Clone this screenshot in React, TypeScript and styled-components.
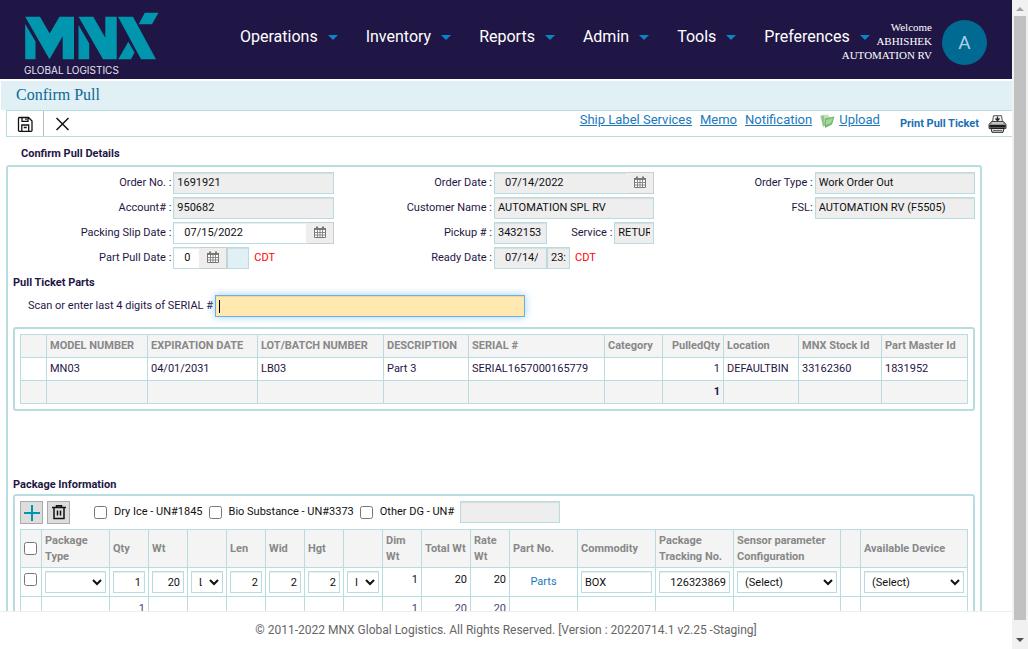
import React, { useId } from "react";
import styled, { createGlobalStyle, css } from "styled-components";

const line = "#b8dce0";
const ink = "#1f1645";

const GlobalStyle = createGlobalStyle`
  *, *::before, *::after { box-sizing: border-box; }
  html, body { margin: 0; background: #fff; }
  body, input, select, button { font-family: Roboto, "Liberation Sans", sans-serif; font-size: 11px; }
  body { color: ${ink}; }
`;

const Screen = styled.div`
  display: flex;
  height: 100vh;
  overflow: hidden;
`;
const Page = styled.div`
  flex: 1;
  min-width: 0;
  display: flex;
  flex-direction: column;
`;

/* Header */
const Header = styled.header`
  flex: none;
  display: flex;
  height: 79px;
  padding: 0 25px 0 24px;
  background: ${ink};
  color: #fff;
`;
const Brand = styled.a`
  flex: none;
  width: 216px;
  padding-top: 12px;
  color: #e6e4ee;
  font: 10px/12px Inter, "Liberation Sans", sans-serif;
  text-decoration: none;
  svg { display: block; margin-bottom: 4px; }
`;
const Nav = styled.nav`
  flex: 1;
  min-width: 0;
  display: flex;
  gap: 28px;
  padding-top: 27px;
`;
const NavItem = styled.button`
  flex: none;
  display: flex;
  align-items: center;
  gap: 10px;
  height: 20px;
  padding: 0;
  border: 0;
  background: none;
  color: #fff;
  font-size: 16px;
  line-height: 20px;
`;
const User = styled.div`
  flex: none;
  display: flex;
  gap: 10px;
  padding-top: 20px;
`;
const Welcome = styled.div`
  display: flex;
  flex-direction: column;
  align-items: flex-end;
  width: 56px;
  font: 11px/14px "Liberation Serif", serif;
  white-space: nowrap;
`;
const Avatar = styled.div`
  width: 45px;
  height: 45px;
  border-radius: 50%;
  background: #006a93;
  color: #a9d2e2;
  font-size: 19px;
  line-height: 45px;
  text-align: center;
`;

const Title = styled.h1`
  flex: none;
  height: 29px;
  margin: 2px 0 0 1px;
  padding-left: 15px;
  background: #e1f0f4;
  color: #0b6a94;
  font: 16px/28px "Liberation Serif", serif;
`;
const Toolbar = styled.div`
  flex: none;
  display: flex;
  height: 27px;
  margin-left: 6px;
  border: 1px solid ${line};
  border-right: 0;
`;
const ToolButton = styled.button<{ $divided?: boolean }>`
  display: flex;
  align-items: center;
  justify-content: center;
  width: 37px;
  padding: 0;
  border: 0;
  border-right: ${(p) => (p.$divided ? "1px solid #bbb" : "0")};
  background: none;
`;
const Links = styled.div`
  flex: 1;
  display: flex;
  justify-content: flex-end;
  gap: 8px;
  padding-right: 5px;
  line-height: 18px;
`;
const Link = styled.a`
  color: #1a79bd;
  font-size: 13px;
`;
const UploadIcon = styled.svg`
  margin-top: 3px;
  margin-right: -4px;
`;
const PrintLink = styled.a`
  display: flex;
  align-items: center;
  gap: 9px;
  margin-left: 12px;
  color: #1a6fb5;
  font-weight: 700;
  text-decoration: none;
`;

/* Body */
const Main = styled.main`
  flex: 1;
  min-height: 0;
  overflow: hidden;
  padding: 9px 30px 0 6px;
`;
const Heading = styled.h2<{ $inset?: boolean; $spaced?: boolean }>`
  margin: ${(p) => (p.$spaced ? "6px" : "0")} 0 0;
  padding-left: ${(p) => (p.$inset ? "15px" : "0")};
  font-size: 11px;
  font-weight: 700;
  line-height: 16px;
`;
const Panel = styled.section`
  margin-top: 3px;
  padding: 5px;
  border: 2px solid ${line};
  border-radius: 3px;
`;
const Fields = styled.div`
  display: grid;
  grid-template-columns: repeat(3, 1fr);
  gap: 3px 0;
`;
const Field = styled.div<{ $col: number; $row: number }>`
  grid-column: ${(p) => p.$col};
  grid-row: ${(p) => p.$row};
  display: grid;
  grid-template-columns: 1fr 1fr;
  height: 22px;
`;
const Label = styled.label`
  padding-right: 2px;
  line-height: 21px;
  text-align: right;
  white-space: nowrap;
`;
const Control = styled.div`
  display: flex;
  min-width: 0;
`;
const Input = styled.input<{ $w?: number; $date?: boolean; $tint?: boolean }>`
  ${(p) => (p.$w ? `flex: none; width: ${p.$w}px;` : "flex: 1; width: 100%;")}
  min-width: 0;
  height: 22px;
  padding: ${(p) => (p.$date ? "0 8px 2px 10px" : "0 3px 2px")};
  border: 1px solid ${line};
  border-radius: 0;
  background: ${(p) => (p.$tint ? "#e1f0f4" : "#fff")};
  box-shadow: inset 0 1px 1px rgba(0, 0, 0, 0.08);
  color: #111;
  &:read-only { background: #eee; }
`;
const DateButton = styled.button`
  flex: none;
  display: flex;
  align-items: center;
  justify-content: center;
  width: 28px;
  height: 22px;
  margin-left: -1px;
  padding: 0 0 2px;
  border: 1px solid #ccc;
  border-left-color: #eee;
  background: #eee;
`;
const Zone = styled.span`
  margin-left: 5px;
  color: #f00;
  line-height: 21px;
`;
const ServiceLabel = styled(Label)`
  flex: 1;
`;
const ScanRow = styled.div`
  display: flex;
  margin: 4px 0 10px 15px;
`;
const ScanInput = styled.input`
  width: 310px;
  height: 22px;
  padding: 0 3px;
  border: 1px solid #66afe9;
  background: linear-gradient(#000, #000) 3px 4px / 1px 13px no-repeat, #ffe9b0;
  box-shadow: inset 0 1px 1px rgba(0, 0, 0, 0.08), 0 0 8px rgba(102, 175, 233, 0.6);
  caret-color: transparent;
  outline: 0;
`;
const PartsPanel = styled(Panel)`
  margin: 0 0 66px;
`;
const PackagePanel = styled(Panel)`
  margin-top: 1px;
`;

/* Tables */
const Grid = styled.table`
  width: 100%;
  table-layout: fixed;
  border-collapse: collapse;
`;
const cell = css<{ $right?: boolean }>`
  border: 1px solid ${line};
  text-align: ${(p) => (p.$right ? "right" : "left")};
`;
const Th = styled.th<{ $right?: boolean }>`
  ${cell}
  padding: 0 3px;
  background: #f4f4f4;
  color: #888;
  font-weight: 700;
  line-height: 16px;
`;
const Td = styled.td<{ $right?: boolean; $sum?: boolean }>`
  ${cell}
  height: 23px;
  padding: 0 3px 2px;
  background: ${(p) => (p.$sum ? "#f4f4f4" : "#fff")};
  font-weight: ${(p) => (p.$sum ? 700 : 400)};
  white-space: nowrap;
`;
const HeadRow = styled.tr<{ $tall?: boolean }>`
  height: ${(p) => (p.$tall ? "38px" : "23px")};
`;
const PackCell = styled.td<{ $right?: boolean; $middle?: boolean }>`
  ${cell}
  height: 29px;
  padding: 3px;
  color: #111;
  vertical-align: ${(p) => (p.$middle ? "middle" : "top")};
  line-height: 18px;
`;
const TotalCell = styled(PackCell)`
  color: #4a4370;
`;
const Select = styled.select<{ $unit?: boolean }>`
  display: block;
  width: 100%;
  height: 22px;
  padding: 0 ${(p) => (p.$unit ? "4px" : "0")} 0 3px;
  border: 1px solid ${line};
  border-radius: 0;
  background: #fff;
  box-shadow: inset 0 1px 1px rgba(0, 0, 0, 0.08);
  color: #111;
`;
const CellInput = styled(Input)<{ $num?: boolean }>`
  display: block;
  padding: 0 3px;
  text-align: ${(p) => (p.$num ? "right" : "left")};
`;
const Check = styled.input`
  flex: none;
  display: block;
  width: 13px;
  height: 13px;
  margin: 0;
`;
const RowCheck = styled(Check)`
  margin-top: 2px;
`;
const PartsLink = styled.a`
  display: block;
  color: #1a79bd;
  text-align: center;
  text-decoration: none;
`;
const Actions = styled.div`
  display: flex;
  height: 28px;
`;
const IconButton = styled.button`
  display: flex;
  align-items: center;
  justify-content: center;
  width: 23px;
  height: 23px;
  margin-right: 4px;
  padding: 0;
  border: 1px solid #aaa;
  background: #ddd;
`;
const Hazards = styled.div`
  display: flex;
  gap: 6px;
  margin-left: 20px;
`;
const Hazard = styled.label`
  display: flex;
  gap: 7px;
  color: #111;
  line-height: 21px;
  white-space: nowrap;
  input { margin-top: 5px; }
`;

const Footer = styled.footer`
  flex: none;
  height: 38px;
  border-top: 1px solid #eee;
  color: #666;
  font-size: 12px;
  line-height: 36px;
  text-align: center;
`;
const ScrollTrack = styled.div`
  flex: none;
  display: flex;
  flex-direction: column;
  align-items: center;
  justify-content: space-between;
  width: 16px;
  background: #f1f1f1;
  svg { flex: none; display: block; }
`;
const ScrollThumb = styled.div`
  flex: 1;
  width: 12px;
  margin-bottom: 13px;
  background: #c1c1c1;
`;

const Logo = () => (
  <svg width="135" height="48" viewBox="0 0 135 48" fill="#0097ae" aria-hidden="true">
    <path d="M1.200 12 L11.500 29.500 V47.300 H1.200 Z" />
    <path d="M1.200 4.700 H16 L25.700 21.500 L35.400 4.700 H50 V47.300 H38.700 V24.300 L25.500 47.300 Z" />
    <path d="M54.500 13 L65.200 31.500 V47.300 H54.500 Z" />
    <path d="M54.500 4.700 H69.300 L81.300 25.700 V4.700 H92.700 V47.300 H79 Z" />
    <path d="M94 4.700 H109 L132 47.300 H117 Z" />
    <path d="M94.300 47.300 L104.300 29.700 L110.500 40.500 L107 47.300 Z" />
    <path d="M120.800 0.800 H134.500 L128 12.200 H114.700 Z" />
  </svg>
);
const Calendar = () => (
  <svg width="12" height="12" viewBox="0 0 12 12" aria-hidden="true">
    <path d="M0.500 2.500 H11.500 V11.500 H0.500 Z" fill="#fff" stroke="#777" />
    <path d="M0 2 H12 V4 H0 Z" fill="#777" />
    <path d="M3 0.500 V3 M9 0.500 V3" stroke="#777" strokeWidth="2" />
    <path d="M3.500 4 V11 M6 4 V11 M8.500 4 V11 M1 6.500 H11 M1 9 H11" stroke="#888" strokeWidth="1" />
  </svg>
);
const Arrow = ({ up }: { up?: boolean }) => (
  <svg width="16" height="16" viewBox="0 0 16 16" aria-hidden="true">
    <path d={up ? "M4 11 L8 7 L12 11 Z" : "M4 5 H12 L8 9 Z"} fill={up ? "#a3a3a3" : "#505050"} />
  </svg>
);

type TextFieldProps = { label: string; value: string; col: number; row: number };
const TextField = ({ label, value, col, row }: TextFieldProps) => {
  const id = useId();
  return (
    <Field $col={col} $row={row}>
      <Label htmlFor={id}>{label}</Label>
      <Control><Input id={id} defaultValue={value} readOnly /></Control>
    </Field>
  );
};
const DateField = ({ label, value, col, row, readOnly }: TextFieldProps & { readOnly?: boolean }) => {
  const id = useId();
  return (
    <Field $col={col} $row={row}>
      <Label htmlFor={id}>{label}</Label>
      <Control>
        <Input id={id} $date defaultValue={value} readOnly={readOnly} />
        <DateButton aria-label={`Pick ${label}`}><Calendar /></DateButton>
      </Control>
    </Field>
  );
};

const menus = ["Operations", "Inventory", "Reports", "Admin", "Tools", "Preferences"];
const partColumns: [string, number, string][] = [
  ["", 26, ""],
  ["MODEL NUMBER", 101, "MN03"],
  ["EXPIRATION DATE", 110, "04/01/2031"],
  ["LOT/BATCH NUMBER", 126, "LB03"],
  ["DESCRIPTION", 85, "Part 3"],
  ["SERIAL #", 136, "SERIAL1657000165779"],
  ["Category", 58, ""],
  ["PulledQty", 61, "1"],
  ["Location", 75, "DEFAULTBIN"],
  ["MNX Stock Id", 83, "33162360"],
  ["Part Master Id", 86, "1831952"],
];
const packColumns: [string, number, string][] = [
  ["Package Type", 68, ""], ["Qty", 39, "1"], ["Wt", 39, ""], ["", 39, ""], ["Len", 39, ""],
  ["Wid", 39, ""], ["Hgt", 39, ""], ["", 39, ""], ["Dim Wt", 39, "1"], ["Total Wt", 49, "20"],
  ["Rate Wt", 39, "20"], ["Part No.", 68, ""], ["Commodity", 78, ""], ["Package Tracking No.", 78, ""],
  ["Sensor parameter Configuration", 107, ""], ["", 20, ""], ["Available Device", 107, ""],
];

const NumberCell = ({ name, value }: { name: string; value: string }) => (
  <PackCell><CellInput $num aria-label={name} defaultValue={value} /></PackCell>
);
const SelectCell = ({ name, value, unit }: { name: string; value: string; unit?: boolean }) => (
  <PackCell><Select $unit={unit} aria-label={name}><option>{value}</option></Select></PackCell>
);

export default function App() {
  return (
    <Screen>
      <GlobalStyle />
      <Page>
        <Header>
          <Brand href="#"><Logo />GLOBAL LOGISTICS</Brand>
          <Nav>
            {menus.map((m) => (
              <NavItem key={m}>
                {m}
                <svg width="10" height="6" viewBox="0 0 10 6" aria-hidden="true"><path d="M0 1 H10 L5 6 Z" fill="#0a84c6" /></svg>
              </NavItem>
            ))}
          </Nav>
          <User>
            <Welcome><span>Welcome</span><span>ABHISHEK</span><span>AUTOMATION RV</span></Welcome>
            <Avatar>A</Avatar>
          </User>
        </Header>
        <Title>Confirm Pull</Title>
        <Toolbar>
          <ToolButton $divided aria-label="Save">
            <svg width="16" height="16" viewBox="0 0 16 16" fill="none" stroke="#111" strokeWidth="1.300" aria-hidden="true">
              <path d="M2.500 1.500 H11.500 L15 5 V14.500 Q15 15.300 14.200 15.300 H2.500 Q1.500 15.300 1.500 14.500 V2.500 Q1.500 1.500 2.500 1.500 Z M5 1.500 V5.300 H11 V1.500 M9 2.500 V4 M4.800 15 V9 H11.700 V15 M6.800 11.500 H9.700" />
            </svg>
          </ToolButton>
          <ToolButton aria-label="Close">
            <svg width="14" height="14" viewBox="0 0 14 14" stroke="#111" strokeWidth="1.500" aria-hidden="true"><path d="M0.500 1 L12.500 13 M12.500 1 L0.500 13" /></svg>
          </ToolButton>
          <Links>
            <Link href="#">Ship Label Services</Link>
            <Link href="#">Memo</Link>
            <Link href="#">Notification</Link>
            <UploadIcon width="15" height="14" viewBox="0 0 15 14" aria-hidden="true">
              <path d="M0 1.500 L8 0.500 L10 4 L9 11 L3 12.500 Z" fill="#c3e0b9" />
              <path d="M1 2 L4 1.500 L5 12 L3 12.500 Z" fill="#8fc587" />
              <path d="M5 4.500 L9 3.500 L14.500 2.500 L12 10.500 L5 14 Z" fill="#74b96d" />
              <path d="M6 6 L13 4 L11 9 L6 11 Z" fill="#a5d59c" />
            </UploadIcon>
            <Link href="#">Upload</Link>
            <PrintLink href="#">
              Print Pull Ticket
              <svg width="19" height="18" viewBox="0 0 19 18" aria-hidden="true">
                <path d="M4.500 7 L5.500 0.700 H13.500 L14.500 7 Z" fill="#f2f2f2" stroke="#555" />
                <path d="M9.500 1.500 V5 M7.500 3.500 L9.500 5.500 L11.500 3.500" fill="none" stroke="#222" strokeWidth="1.300" />
                <path d="M3.500 6.500 H15.500 L18 9.500 V13.500 H1 V9.500 Z" fill="#999" stroke="#444" />
                <path d="M4 8 H15" stroke="#eee" />
                <path d="M1.500 10 H17.500 V12.500 H1.500 Z" fill="#1c1c1c" />
                <path d="M3 13.500 H16 L15 17.300 H4 Z" fill="#ddd" stroke="#222" />
                <path d="M5 15.500 H14" stroke="#666" />
              </svg>
            </PrintLink>
          </Links>
        </Toolbar>
        <Main>
          <Heading $inset>Confirm Pull Details</Heading>
          <Panel>
            <Fields>
              <TextField col={1} row={1} label="Order No. :" value="1691921" />
              <TextField col={1} row={2} label="Account# :" value="950682" />
              <DateField col={1} row={3} label="Packing Slip Date :" value="07/15/2022" />
              <Field $col={1} $row={4}>
                <Label htmlFor="pull-date">Part Pull Date :</Label>
                <Control>
                  <Input id="pull-date" $w={27} $date defaultValue="07/15/2022" />
                  <DateButton aria-label="Pick part pull date"><Calendar /></DateButton>
                  <Input aria-label="Part pull time" $w={22} $tint />
                  <Zone>CDT</Zone>
                </Control>
              </Field>
              <DateField col={2} row={1} label="Order Date :" value="07/14/2022" readOnly />
              <TextField col={2} row={2} label="Customer Name :" value="AUTOMATION SPL RV" />
              <Field $col={2} $row={3}>
                <Label htmlFor="pickup">Pickup # :</Label>
                <Control>
                  <Input id="pickup" $w={53} defaultValue="3432153" readOnly />
                  <ServiceLabel htmlFor="service">Service :</ServiceLabel>
                  <Input id="service" $w={40} defaultValue="RETURN" readOnly />
                </Control>
              </Field>
              <Field $col={2} $row={4}>
                <Label htmlFor="ready-date">Ready Date :</Label>
                <Control>
                  <Input id="ready-date" $w={53} $date defaultValue="07/14/2022" readOnly />
                  <Input aria-label="Ready time" $w={23} defaultValue="23:59" readOnly />
                  <Zone>CDT</Zone>
                </Control>
              </Field>
              <TextField col={3} row={1} label="Order Type :" value="Work Order Out" />
              <TextField col={3} row={2} label="FSL:" value="AUTOMATION RV (F5505)" />
            </Fields>
            <Heading as="h3" $spaced>Pull Ticket Parts</Heading>
            <ScanRow>
              <Label htmlFor="serial">Scan or enter last 4 digits of SERIAL #</Label>
              <ScanInput id="serial" />
            </ScanRow>
            <PartsPanel>
              <Grid>
                <colgroup>{partColumns.map(([n, w], i) => <col key={n + i} width={w} />)}</colgroup>
                <thead>
                  <HeadRow>{partColumns.map(([n], i) => <Th key={i} $right={n === "PulledQty"}>{n}</Th>)}</HeadRow>
                </thead>
                <tbody>
                  <tr>{partColumns.map(([n, , v], i) => <Td key={i} $right={n === "PulledQty"}>{v}</Td>)}</tr>
                  <tr>
                    {partColumns.map(([n], i) => (
                      <Td key={i} $sum $right={n === "PulledQty"}>{n === "PulledQty" ? "1" : ""}</Td>
                    ))}
                  </tr>
                </tbody>
              </Grid>
            </PartsPanel>
            <Heading as="h3">Package Information</Heading>
            <PackagePanel>
              <Actions>
                <IconButton aria-label="Add package">
                  <svg width="17" height="17" viewBox="0 0 17 17" stroke="#0097ae" strokeWidth="2" aria-hidden="true"><path d="M9 1 V17 M1 9 H17" /></svg>
                </IconButton>
                <IconButton aria-label="Delete package">
                  <svg width="15" height="15" viewBox="0 0 15 15" fill="none" stroke="#111" strokeWidth="1.500" aria-hidden="true">
                    <path d="M1 2.500 H15 M5.500 2 V0.700 H10.500 V2 M3 3 V13.500 H13 V3 M6.500 5.500 V10.500 M9.500 5.500 V10.500" />
                  </svg>
                </IconButton>
                <Hazards>
                  <Hazard><Check type="checkbox" />Dry Ice - UN#1845</Hazard>
                  <Hazard><Check type="checkbox" />Bio Substance - UN#3373</Hazard>
                  <Hazard><Check type="checkbox" />Other DG - UN#</Hazard>
                  <Input aria-label="Other DG UN number" $w={100} readOnly />
                </Hazards>
              </Actions>
              <Grid>
                <colgroup>
                  <col width={21} />
                  {packColumns.map(([, w], i) => <col key={i} width={w} />)}
                </colgroup>
                <thead>
                  <HeadRow $tall>
                    <Th><Check type="checkbox" aria-label="Select all packages" /></Th>
                    {packColumns.map(([n], i) => <Th key={i}>{n}</Th>)}
                  </HeadRow>
                </thead>
                <tbody>
                  <tr>
                    <PackCell><RowCheck type="checkbox" aria-label="Select package" /></PackCell>
                    <SelectCell name="Package type" value="" />
                    <NumberCell name="Quantity" value="1" />
                    <NumberCell name="Weight" value="20" />
                    <SelectCell unit name="Weight unit" value="LB" />
                    <NumberCell name="Length" value="2" />
                    <NumberCell name="Width" value="2" />
                    <NumberCell name="Height" value="2" />
                    <SelectCell unit name="Dimension unit" value="IN" />
                    <PackCell $right>1</PackCell>
                    <PackCell $right>20</PackCell>
                    <PackCell $right>20</PackCell>
                    <PackCell $middle><PartsLink href="#">Parts</PartsLink></PackCell>
                    <PackCell><CellInput aria-label="Commodity" defaultValue="BOX" /></PackCell>
                    <NumberCell name="Tracking number" value="126323869" />
                    <SelectCell name="Sensor configuration" value="(Select)" />
                    <PackCell />
                    <SelectCell name="Available device" value="(Select)" />
                  </tr>
                  <tr>
                    <TotalCell />
                    {packColumns.map(([, , t], i) => <TotalCell key={i} $right>{t}</TotalCell>)}
                  </tr>
                </tbody>
              </Grid>
            </PackagePanel>
          </Panel>
        </Main>
        <Footer>© 2011-2022 MNX Global Logistics. All Rights Reserved. [Version : 20220714.1 v2.25 -Staging]</Footer>
      </Page>
      <ScrollTrack aria-hidden="true"><Arrow up /><ScrollThumb /><Arrow /></ScrollTrack>
    </Screen>
  );
}
